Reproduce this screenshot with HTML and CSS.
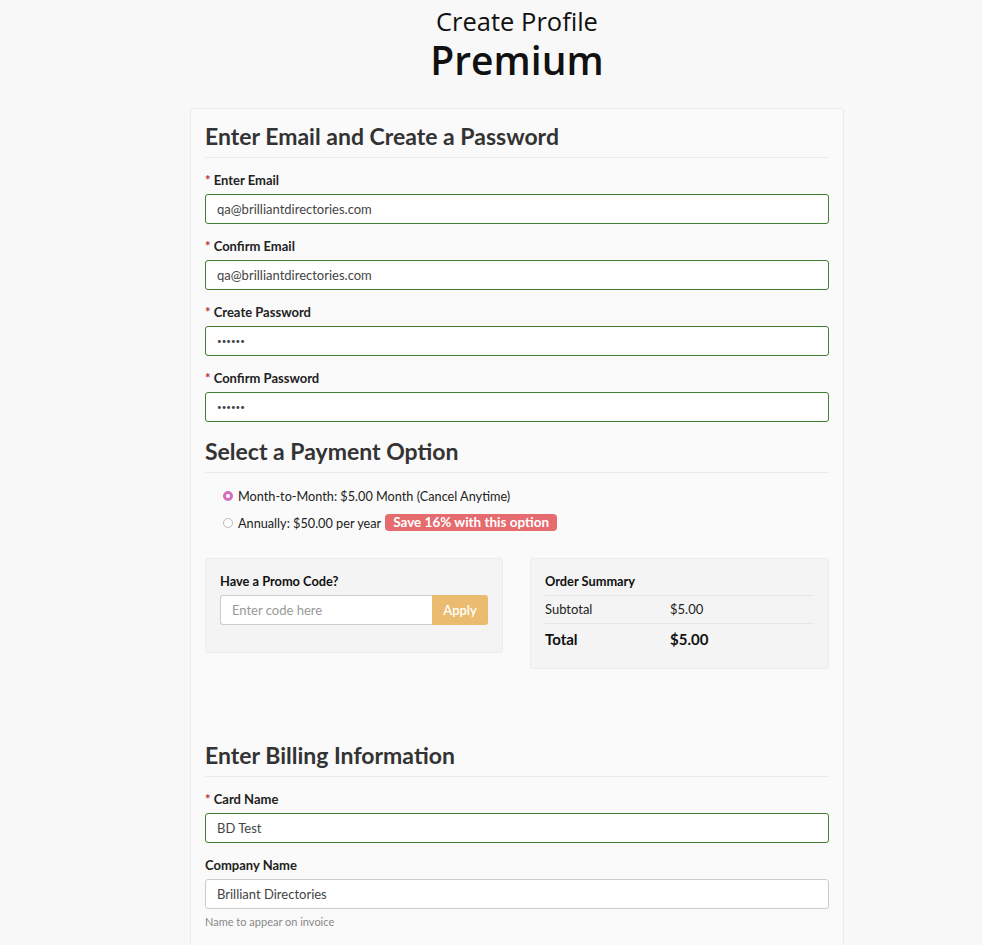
FILE: index.html
```html
<!DOCTYPE html>
<html>
<head>
<meta charset="utf-8">
<link rel="stylesheet" href="styles.css">
</head>
<body>
<div class="page">
<header class="page-head">
  <div class="sub">Create Profile</div>
  <h1 class="plan">Premium</h1>
</header>
<main class="card">
  <section>
    <h2 class="sec-title">Enter Email and Create a Password</h2>
    <div class="field">
      <label><span class="req">*</span> Enter Email</label>
      <div class="input valid">qa@brilliantdirectories.com</div>
    </div>
    <div class="field">
      <label><span class="req">*</span> Confirm Email</label>
      <div class="input valid">qa@brilliantdirectories.com</div>
    </div>
    <div class="field">
      <label><span class="req">*</span> Create Password</label>
      <div class="input valid dots">••••••</div>
    </div>
    <div class="field">
      <label><span class="req">*</span> Confirm Password</label>
      <div class="input valid dots">••••••</div>
    </div>
  </section>
  <section class="payment">
    <h2 class="sec-title">Select a Payment Option</h2>
    <div class="options">
      <div class="opt"><span class="radio checked"></span>Month-to-Month: $5.00 Month (Cancel Anytime)</div>
      <div class="opt"><span class="radio"></span>Annually: $50.00 per year <span class="badge">Save 16% with this option</span></div>
    </div>
    <div class="boxes">
      <div class="box promo">
        <div class="box-title">Have a Promo Code?</div>
        <div class="promo-row">
          <div class="promo-input">Enter code here</div>
          <div class="apply">Apply</div>
        </div>
      </div>
      <div class="box summary">
        <div class="box-title">Order Summary</div>
        <div class="srow"><span class="k">Subtotal</span><span>$5.00</span></div>
        <div class="srow total"><span class="k">Total</span><span>$5.00</span></div>
      </div>
    </div>
  </section>
  <section class="billing">
    <h2 class="sec-title">Enter Billing Information</h2>
    <div class="field">
      <label><span class="req">*</span> Card Name</label>
      <div class="input valid">BD Test</div>
    </div>
    <div class="field">
      <label>Company Name</label>
      <div class="input">Brilliant Directories</div>
      <div class="help">Name to appear on invoice</div>
    </div>
  </section>
</main>
</div>
</body>
</html>
```
FILE: styles.css
```css
* { box-sizing: border-box; }
html, body { margin: 0; padding: 0; }
body {
  background: #f8f8f8;
  font-family: "Lato", "Noto Sans", sans-serif;
  color: #333;
  font-size: 13px;
}
.page { padding-left: 52px; }
.page-head { text-align: center; padding-top: 5px; color: #111; }
.page-head .sub { font-family: "Open Sans", sans-serif; font-size: 25.5px; line-height: 32px; }
.page-head .plan { font-family: "Open Sans", sans-serif; font-size: 39px; font-weight: 600; margin: 0; line-height: 46px; }
.card {
  width: 654px;
  margin: 25px auto 0;
  background: #fafafa;
  border: 1px solid #ececec;
  border-radius: 3px 3px 0 0;
  padding: 12px 14px 20px;
}
.sec-title {
  font-size: 23px;
  font-weight: 700;
  color: #333;
  margin: 0 0 14px;
  padding-bottom: 6px;
  border-bottom: 1px solid #ebebeb;
  line-height: 30px;
}
.field { margin-bottom: 14px; }
.field label { display: block; font-weight: 700; font-size: 13px; color: #222; line-height: 16px; margin-bottom: 6px; }
.req { color: #b33; }
.input {
  height: 30px;
  border: 1px solid #ccc;
  border-radius: 3px;
  background: #fff;
  padding: 0 11px;
  line-height: 28px;
  font-size: 13px;
  color: #444;
}
.input.valid { border-color: #3f7f2f; }
.input.dots { font-size: 8px; letter-spacing: 0; color: #444; }
.payment { margin-top: 4px; }
.payment .sec-title { margin-bottom: 9px; }
.options { padding-left: 18px; }
.opt { display: flex; align-items: center; height: 27px; font-size: 12.7px; color: #222; }
.radio {
  width: 10px; height: 10px; border-radius: 50%;
  border: 1px solid #bbb; background: #fff; margin-right: 5px;
}
.radio.checked { border: 3px solid #d66ebd; background: #fff; }
.badge {
  background: #e56b6f; color: #fff; font-weight: 700; font-size: 13.5px;
  border-radius: 4px; padding: 1px 8px; margin-left: 4px; line-height: 15px;
}
.boxes { display: flex; gap: 27px; margin-top: 22px; align-items: flex-start; }
.box {
  background: #f4f4f4;
  border: 1px solid #ececec;
  border-radius: 3px;
}
.promo { width: 298px; height: 95px; padding: 14px 14px; }
.summary { flex: 1; padding: 14px 14px 13px; }
.box-title { font-weight: 700; font-size: 12.8px; color: #111; line-height: 16px; }
.promo .box-title { margin-bottom: 6px; }
.promo-row { display: flex; height: 30px; }
.promo-input {
  flex: 1; background: #fff; border: 1px solid #ccc; border-right: 0;
  border-radius: 3px 0 0 3px; padding: 0 11px; line-height: 28px; color: #999;
}
.apply {
  width: 56px; background: #ebbb6f; color: #fff; font-weight: 600;
  border-radius: 0 3px 3px 0; text-align: center; line-height: 30px;
}
.summary .box-title { padding-bottom: 6px; border-bottom: 1px solid #e6e6e6; }
.srow { display: flex; border-bottom: 1px solid #e6e6e6; line-height: 27px; color: #222; }
.srow .k { width: 125px; }
.srow.total { border-bottom: 0; font-weight: 700; font-size: 15px; line-height: 31px; color: #111; }
.billing { margin-top: 71px; }
.help { font-size: 11px; color: #888; margin-top: 6px; }
```
